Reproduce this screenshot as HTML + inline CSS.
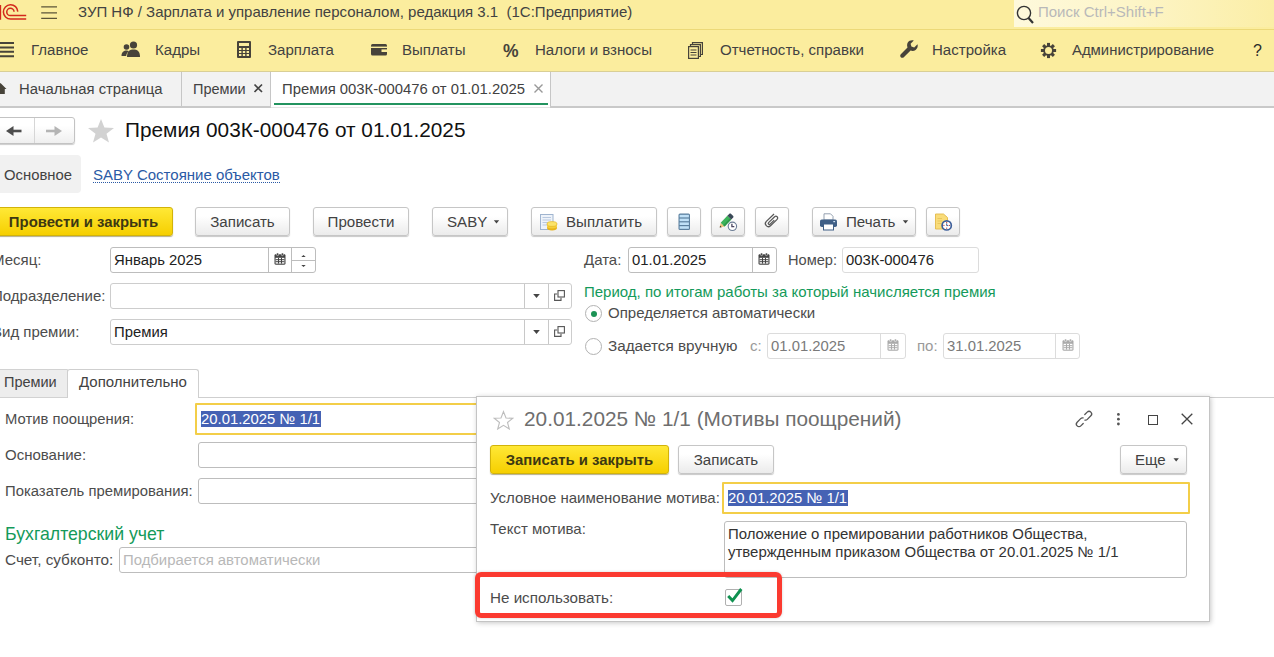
<!DOCTYPE html>
<html lang="ru">
<head>
<meta charset="utf-8">
<title>Премия 003К-000476 от 01.01.2025</title>
<style>
*{box-sizing:border-box;margin:0;padding:0}
html,body{width:1274px;height:657px;overflow:hidden;background:#fff}
body{font-family:"Liberation Sans",sans-serif;font-size:14.85px;color:#424242;position:relative}
.abs{position:absolute;white-space:nowrap}
.t{position:absolute;white-space:nowrap;line-height:18px;height:18px}
#titlebar{left:0;top:0;width:1274px;height:29px;background:#fbed9e}
#sep1{left:0;top:29px;width:1274px;height:1px;background:#ecd978}
#menubar{left:0;top:30px;width:1274px;height:41px;background:#fbed9e}
#sep2{left:0;top:71px;width:1274px;height:1px;background:#d9cf96}
#tabbar{left:0;top:72px;width:1274px;height:34px;background:#f2f2f2}
#sep3{left:0;top:106px;width:1274px;height:2px;background:#c9c9c9}
#search{left:1014px;top:0;width:260px;height:27px;background:linear-gradient(90deg,#fef9dc,#fdf5c8 45%,#fbeea6)}
.btn{position:absolute;height:29px;border:1px solid #c6c6c6;border-radius:3px;background:linear-gradient(#ffffff 30%,#ebebeb);box-shadow:0 1px 1px rgba(0,0,0,.22);text-align:center;line-height:28px;font-size:15.1px;color:#424242;white-space:nowrap}
.btn.y{background:linear-gradient(#ffe836,#f6cf00);border-color:#d2b30a;font-weight:bold;color:#3d3812;font-size:14.9px;box-shadow:0 1px 1px rgba(90,75,0,.45)}
.inp{position:absolute;height:26px;border:1px solid #bdbdbd;border-radius:3px;background:#fff;line-height:24px;font-size:14.85px;color:#222;padding-left:3px;white-space:nowrap;overflow:hidden}
.inp.dis{color:#7a7a7a;border-color:#dcdcdc}
.lbl{position:absolute;white-space:nowrap;font-size:15px;color:#4c4c4c;line-height:18px}
.sel{background:#4562b4;color:#fff}
.vsep{position:absolute;width:1px;background:#c6c6c6}
</style>
</head>
<body>
<!-- title bar -->
<div class="abs" id="titlebar"></div>
<div class="abs" id="sep1"></div>
<div class="abs" id="menubar"></div>
<div class="abs" id="sep2"></div>
<div class="abs" id="tabbar"></div>
<div class="abs" id="sep3"></div>
<div class="abs" id="search"></div>

<!-- logo -->
<svg class="abs" style="left:0;top:0" width="30" height="26" viewBox="0 0 30 26">
 <g fill="none" stroke="#d3291c" stroke-width="1.5">
  <path d="M0.4 5 V19.8"/>
  <path d="M17.8 11.6 A7.2 7.2 0 1 0 10.6 19.1 H26.2"/>
  <path d="M14.05 11.8 A3.65 3.65 0 1 0 10.4 15.6 H26.2"/>
 </g>
</svg>
<!-- hamburger -->
<svg class="abs" style="left:40px;top:0px" width="20" height="24" viewBox="0 0 20 24"><g stroke="#5c5538" stroke-width="1.35"><path d="M1.2 6.900H17M1.200 12.900H17M1.200 18.400H17"/></g></svg>
<div class="t" style="left:78px;top:3px;font-size:15px;color:#424242">ЗУП НФ / Зарплата и управление персоналом, редакция 3.1&nbsp; (1С:Предприятие)</div>
<svg class="abs" style="left:1015px;top:3px" width="20" height="22" viewBox="0 0 20 22"><circle cx="9" cy="10" r="6.6" fill="none" stroke="#333" stroke-width="1.4"/><path d="M13.5 15 L18 20" stroke="#333" stroke-width="2.2"/></svg>
<div class="t" style="left:1038px;top:3px;font-size:15px;color:#b9b9b9">Поиск Ctrl+Shift+F</div>

<!-- section menu -->
<svg class="abs" style="left:0;top:41px" width="15" height="17" viewBox="0 0 15 17"><g stroke="#47433a" stroke-width="2"><path d="M0 2H14M0 6.4H14M0 10.8H14M0 15.2H14"/></g></svg>
<div class="t" style="left:31px;top:40.5px;font-size:15.05px">Главное</div>
<svg class="abs" style="left:121px;top:40px" width="20" height="18" viewBox="0 0 20 18"><g fill="#47433a"><circle cx="12.5" cy="5" r="3.6"/><path d="M6 17 C6 11 9 9.5 12.5 9.5 S19 11 19 17Z"/><circle cx="5.5" cy="7" r="2.8"/><path d="M0.5 16 C0.5 12 3 10.5 5.5 10.5 C6.5 10.5 7.4 10.8 8 11.2 C6 12.5 5.4 14 5.2 16Z"/></g></svg>
<div class="t" style="left:155px;top:40.5px;font-size:15.05px">Кадры</div>
<svg class="abs" style="left:237px;top:41px" width="14" height="17" viewBox="0 0 14 17"><rect x="0" y="0" width="14" height="17" rx="1" fill="#47433a"/><rect x="2" y="2" width="10" height="3" fill="#fbed9e"/><g fill="#fbed9e"><rect x="2" y="7" width="2.4" height="2"/><rect x="5.8" y="7" width="2.4" height="2"/><rect x="9.6" y="7" width="2.4" height="2"/><rect x="2" y="10" width="2.4" height="2"/><rect x="5.8" y="10" width="2.4" height="2"/><rect x="9.6" y="10" width="2.4" height="2"/><rect x="2" y="13" width="2.4" height="2"/><rect x="5.8" y="13" width="2.4" height="2"/><rect x="9.6" y="13" width="2.4" height="2"/></g></svg>
<div class="t" style="left:268px;top:40.5px;font-size:15.05px">Зарплата</div>
<svg class="abs" style="left:370.700px;top:44px" width="17" height="12" viewBox="0 0 17 12"><rect x="0" y="0" width="16" height="11.500" rx="1.500" fill="#47433a"/><rect x="0" y="2.600" width="16" height="1.400" fill="#fbed9e"/><rect x="10.500" y="5.400" width="5.500" height="2.600" fill="#fbed9e"/></svg>
<div class="t" style="left:402px;top:40.5px;font-size:15.05px">Выплаты</div>
<div class="t" style="left:503px;top:42px;font-weight:bold;font-size:17.500px;color:#47433a">%</div>
<div class="t" style="left:535px;top:40.5px;font-size:15.05px">Налоги и взносы</div>
<svg class="abs" style="left:688px;top:41.600px" width="15" height="17" viewBox="0 0 15 17"><g fill="none" stroke="#47433a" stroke-width="1.2"><path d="M4.5 2.5V0.6H14.4V12.5H12.5"/><path d="M2.5 4.5V2.6H12.4V14.5H10.5"/><rect x="0.6" y="4.6" width="9.8" height="11.8" fill="#fbed9e"/><path d="M2.5 8H8.5M2.5 10.5H8.5M2.5 13H8.5"/></g></svg>
<div class="t" style="left:720px;top:40.5px;font-size:15.05px">Отчетность, справки</div>
<svg class="abs" style="left:900px;top:40px" width="18" height="18" viewBox="0 0 18 18"><path d="M17.5 4.2 L14.2 7.4 L11.4 6.6 L10.6 3.8 L13.8 0.5 C11.5 -0.2 9 0.6 7.8 2.6 C6.9 4.2 6.9 6 7.5 7.4 L0.8 14.2 C0 15 0 16.4 0.8 17.2 C1.6 18 3 18 3.8 17.2 L10.6 10.5 C12.2 11.2 14.2 11 15.6 9.9 C17.4 8.6 18.1 6.3 17.5 4.2Z" fill="#47433a"/></svg>
<div class="t" style="left:932px;top:40.5px;font-size:15.05px">Настройка</div>
<svg class="abs" style="left:1040px;top:41.500px" width="17" height="17" viewBox="-8.500 -8.500 17 17"><g fill="#47433a"><circle r="5.300"/><rect x="-1.500" y="-7.600" width="3" height="15.200"/><rect x="-1.500" y="-7.600" width="3" height="15.200" transform="rotate(45)"/><rect x="-1.500" y="-7.600" width="3" height="15.200" transform="rotate(90)"/><rect x="-1.500" y="-7.600" width="3" height="15.200" transform="rotate(135)"/></g><circle r="3.500" fill="#fbed9e"/></svg>
<div class="t" style="left:1072px;top:40.5px;font-size:14.9px">Администрирование</div>
<div class="t" style="left:1253px;top:42px;font-size:16px;color:#2a2a2a">?</div>

<!-- open windows tabs -->
<svg class="abs" style="left:0;top:83px" width="9" height="12" viewBox="0 0 9 12"><path d="M-5.500 6 L0.500 0 L6.500 6 H4.800 V11 H-3 V6Z" fill="#47433a"/></svg>
<div class="t" style="left:19px;top:80px">Начальная страница</div>
<div class="vsep" style="left:181px;top:72px;height:34px"></div>
<div class="t" style="left:193px;top:80px;font-size:14.500px">Премии</div>
<svg class="abs" style="left:253px;top:83px" width="11" height="11" viewBox="0 0 11 11"><path d="M1.500 1.500L9 9M9 1.500L1.500 9" stroke="#444" stroke-width="1.700"/></svg>
<div class="vsep" style="left:270px;top:72px;height:34px"></div>
<div class="abs" style="left:271px;top:72px;width:279px;height:35px;background:#fff"></div><div class="abs" style="left:271px;top:107px;width:279px;height:1px;background:#e4e4e4"></div>
<div class="vsep" style="left:550px;top:72px;height:34px"></div>
<div class="t" style="left:282px;top:80px">Премия 003К-000476 от 01.01.2025</div>
<svg class="abs" style="left:532.5px;top:83px" width="11" height="11" viewBox="0 0 11 11"><path d="M1.5 1.5L9.5 9.5M9.5 1.5L1.5 9.5" stroke="#999" stroke-width="1.4"/></svg>
<div class="abs" style="left:274px;top:103px;width:274px;height:2px;background:#23935f"></div>

<!-- form header -->
<div class="abs" style="left:-4px;top:117px;width:79px;height:27px;border:1px solid #c3c3c3;border-radius:3px;background:linear-gradient(#fff 30%,#efefef);box-shadow:0 1px 1px rgba(0,0,0,.2)"></div>
<div class="vsep" style="left:34px;top:118px;height:25px;background:#d6d6d6"></div>
<svg class="abs" style="left:5px;top:124px" width="18" height="14" viewBox="0 0 18 14"><path d="M16.5 7H4" fill="none" stroke="#4d4d4d" stroke-width="2.6"/><path d="M1 7 L8.5 2 V12Z" fill="#4d4d4d"/></svg>
<svg class="abs" style="left:45px;top:124px" width="18" height="14" viewBox="0 0 18 14"><path d="M1 7H13" fill="none" stroke="#b4b4b4" stroke-width="2.6"/><path d="M17 7 L9.5 2 V12Z" fill="#b4b4b4"/></svg>
<svg class="abs" style="left:87px;top:118px" width="28" height="26" viewBox="0 0 28 26"><path d="M14 1 L17.4 9.6 L27 10 L19.5 15.8 L22 24.5 L14 19.5 L6 24.5 L8.5 15.8 L1 10 L10.6 9.6Z" fill="#d2d2d2"/></svg>
<div class="t" style="left:125px;top:118px;font-size:20.8px;line-height:24px;height:24px;color:#111">Премия 003К-000476 от 01.01.2025</div>

<div class="abs" style="left:-4px;top:155px;width:85px;height:38px;background:#f1f1f1;border-radius:4px"></div>
<div class="t" style="left:4px;top:166px;color:#424242">Основное</div>
<div class="t" style="left:93px;top:166px;font-size:15px;color:#2a5aa5;border-bottom:1px dotted #2a5aa5;height:17px;line-height:17px">SABY Состояние объектов</div>

<!-- command bar -->
<div class="btn y" style="left:-8px;top:207px;width:181px;padding-left:2px">Провести и закрыть</div>
<div class="btn" style="left:195px;top:207px;width:95px">Записать</div>
<div class="btn" style="left:313px;top:207px;width:96px">Провести</div>
<div class="btn" style="left:432px;top:207px;width:76px;text-align:left;padding-left:14px">SABY</div>
<svg class="abs" style="left:493px;top:220px" width="7" height="4" viewBox="0 0 7 4"><path d="M0.8 0.3H6.2L3.5 3.5Z" fill="#444"/></svg>
<div class="btn" style="left:531px;top:207px;width:126px;text-align:left;padding-left:34px">Выплатить</div>
<!-- doc + coins icon -->
<svg class="abs" style="left:539px;top:213px" width="20" height="19" viewBox="0 0 20 19">
 <rect x="1.5" y="1.5" width="12.5" height="15" fill="#eef3fa" stroke="#9fb4cf" stroke-width="1"/>
 <path d="M3.5 4.5H12M3.5 7H12M3.5 9.500H9M3.5 12H8" stroke="#b9c9e0" stroke-width="1"/>
 <ellipse cx="13" cy="15" rx="5" ry="2.4" fill="#e8b41a"/>
 <ellipse cx="13" cy="13" rx="5" ry="2.4" fill="#f5cf3a"/>
 <ellipse cx="13" cy="11" rx="5" ry="2.4" fill="#fbe36a" stroke="#e2ae18" stroke-width=".6"/>
</svg>
<div class="btn" style="left:667px;top:207px;width:34px"></div>
<svg class="abs" style="left:678px;top:213px" width="13" height="18" viewBox="0 0 13 18">
 <rect x="0.5" y="0.5" width="11.5" height="16.5" rx="1.5" fill="#5b7f9e"/>
 <rect x="1.6" y="1.8" width="9.3" height="2.6" fill="#bfe0f7"/><rect x="1.6" y="5.6" width="9.3" height="2.6" fill="#bfe0f7"/><rect x="1.6" y="9.400" width="9.3" height="2.6" fill="#bfe0f7"/><rect x="1.6" y="13.2" width="9.3" height="2.600" fill="#bfe0f7"/>
</svg>
<div class="btn" style="left:711px;top:207px;width:34px"></div>
<svg class="abs" style="left:711px;top:207px" width="34" height="29" viewBox="711 207 34 29">
 <g transform="translate(719.7 227.6) rotate(-46)">
  <path d="M0 0 L4.200 -2.700 V2.700Z" fill="#f0c27a"/>
  <path d="M0 0 L1.700 -1.100 V1.100Z" fill="#3a3a3a"/>
  <rect x="4.200" y="-2.700" width="9.600" height="5.400" fill="#3db35a"/>
  <rect x="4.200" y="0.900" width="9.600" height="1.800" fill="#2f9a4b"/>
  <path d="M13.800 -2.700 H16.400 C17.300 -2.700 17.800 -2.200 17.800 -1.300 V1.300 C17.800 2.200 17.300 2.700 16.400 2.700 H13.800Z" fill="#3b4a58"/>
 </g>
 <circle cx="732.400" cy="226.300" r="4.200" fill="#fff" stroke="#6c7d95" stroke-width="1.100"/>
 <path d="M731.900 223.800 V226.700 H734.300" fill="none" stroke="#4a4560" stroke-width="1.300"/>
</svg>
<div class="btn" style="left:755px;top:207px;width:34px"></div>
<svg class="abs" style="left:755px;top:207px" width="34" height="29" viewBox="755 207 34 29"><path transform="translate(771.3 220.8) rotate(-44)" d="M6.700 -3 L-4 -3 A3 3 0 0 0 -4 3 L5.200 3 A1.800 1.800 0 0 0 5.200 -0.600 L-3.200 -0.600 A1.070 1.070 0 0 0 -3.200 1.550 L2.600 1.550" fill="none" stroke="#585858" stroke-width="1.250"/></svg>
<div class="btn" style="left:812px;top:207px;width:104px;text-align:left;padding-left:33px">Печать</div>
<svg class="abs" style="left:902px;top:220px" width="7" height="4" viewBox="0 0 7 4"><path d="M0.8 0.3H6.2L3.5 3.5Z" fill="#444"/></svg>
<svg class="abs" style="left:819px;top:213px" width="19" height="18" viewBox="0 0 19 18">
 <path d="M5 0.800H11.500L14 3.300V7H5Z" fill="#fff" stroke="#8a97a8" stroke-width=".9"/>
 <rect x="1" y="6.500" width="17" height="7.500" rx="1.800" fill="#3f5f86"/>
 <rect x="4.500" y="11" width="10" height="6" fill="#fff" stroke="#3f5f86" stroke-width="1"/>
 <rect x="14.300" y="8" width="1.800" height="1.200" fill="#cfe0f2"/>
</svg>
<div class="btn" style="left:926px;top:207px;width:34px"></div>
<svg class="abs" style="left:934px;top:213px" width="20" height="19" viewBox="0 0 20 19">
 <path d="M1.500 1H9.500L13.500 4.500V16H1.500Z" fill="#f9dc7a" stroke="#e2b94a" stroke-width=".9"/>
 <path d="M3.500 5.500H8M3.500 8H8M3.500 10.500H7" stroke="#e9c75c" stroke-width="1"/>
 <circle cx="12.700" cy="12.400" r="4.600" fill="#fff" stroke="#3d5f9a" stroke-width="1.700"/>
 <path d="M12.700 9V10.200M16.100 12.400H14.900M12.700 15.800V14.600M9.300 12.400H10.500" stroke="#d23a2a" stroke-width="1"/>
 <path d="M12.700 10.400V12.600H14.300" fill="none" stroke="#3d5f9a" stroke-width="1"/>
</svg>

<!-- fields left -->
<div class="lbl" style="left:-8px;top:251px">Месяц:</div>
<div class="inp" style="left:110px;top:247px;width:206px">Январь 2025</div>
<div class="vsep" style="left:268px;top:248px;height:24px;background:#bdbdbd"></div>
<div class="vsep" style="left:291px;top:248px;height:24px;background:#bdbdbd"></div>
<div class="abs" style="left:292px;top:260px;width:23px;height:1px;background:#bdbdbd"></div>
<svg class="abs" style="left:300px;top:254px" width="7" height="14" viewBox="0 0 7 14"><path d="M1.300 3L3.500 0.900L5.700 3Z M1.300 11L3.500 13.100L5.700 11Z" fill="#444"/></svg>
<svg class="abs cal" style="left:274px;top:253px" width="12" height="12" viewBox="0 0 12 12"><path d="M0.500 2.500C0.500 1.700 1 1.200 1.800 1.200H10.200C11 1.200 11.500 1.700 11.500 2.500V10.500C11.500 11.200 11 11.700 10.200 11.700H1.800C1 11.700 .5 11.200 .5 10.500Z" fill="#444"/><rect x="1.600" y="4.800" width="8.800" height="5.800" fill="#fff"/><path d="M1.600 6.700H10.400M1.600 8.700H10.400M4.500 4.800V10.600M7.500 4.800V10.600" stroke="#444" stroke-width="1"/><rect x="2.600" y="0" width="2" height="2.600" rx=".8" fill="#444" stroke="#fff" stroke-width=".5"/><rect x="7.400" y="0" width="2" height="2.600" rx=".8" fill="#444" stroke="#fff" stroke-width=".5"/></svg>

<div class="lbl" style="left:-8px;top:287px">Подразделение:</div>
<div class="inp" style="left:110px;top:283px;width:462px;border-color:#cdcdcd"></div>
<div class="vsep" style="left:524px;top:284px;height:24px;background:#c8c8c8"></div>
<div class="vsep" style="left:548px;top:284px;height:24px;background:#c8c8c8"></div>
<svg class="abs" style="left:533px;top:294px" width="7" height="4" viewBox="0 0 7 4"><path d="M0.200 0H6.800L3.500 3.900Z" fill="#444"/></svg>
<svg class="abs" style="left:554px;top:290px" width="11" height="11" viewBox="0 0 11 11"><rect x="4" y="0.600" width="6.400" height="6.400" fill="none" stroke="#555" stroke-width="1.100"/><path d="M3.200 4H0.600V10.400H7V7.800" fill="none" stroke="#555" stroke-width="1.100"/></svg>
<div class="lbl" style="left:-8px;top:323px">Вид премии:</div>
<div class="inp" style="left:110px;top:319px;width:462px;border-color:#cdcdcd">Премия</div>
<div class="vsep" style="left:524px;top:320px;height:24px;background:#c8c8c8"></div>
<div class="vsep" style="left:548px;top:320px;height:24px;background:#c8c8c8"></div>
<svg class="abs" style="left:533px;top:330px" width="7" height="4" viewBox="0 0 7 4"><path d="M0.200 0H6.800L3.500 3.900Z" fill="#444"/></svg>
<svg class="abs" style="left:554px;top:326px" width="11" height="11" viewBox="0 0 11 11"><rect x="4" y="0.600" width="6.400" height="6.400" fill="none" stroke="#555" stroke-width="1.100"/><path d="M3.200 4H0.600V10.400H7V7.800" fill="none" stroke="#555" stroke-width="1.100"/></svg>

<!-- fields right -->
<div class="lbl" style="left:584px;top:251px">Дата:</div>
<div class="inp" style="left:628px;top:247px;width:149px">01.01.2025</div>
<div class="vsep" style="left:752px;top:248px;height:24px;background:#bdbdbd"></div>
<svg class="abs cal" style="left:758px;top:253px" width="12" height="12" viewBox="0 0 12 12"><path d="M0.500 2.500C0.500 1.700 1 1.200 1.800 1.200H10.200C11 1.200 11.500 1.700 11.500 2.500V10.500C11.500 11.200 11 11.700 10.200 11.700H1.800C1 11.700 .5 11.200 .5 10.500Z" fill="#444"/><rect x="1.600" y="4.800" width="8.800" height="5.800" fill="#fff"/><path d="M1.600 6.700H10.400M1.600 8.700H10.400M4.500 4.800V10.600M7.500 4.800V10.600" stroke="#444" stroke-width="1"/><rect x="2.600" y="0" width="2" height="2.600" rx=".8" fill="#444" stroke="#fff" stroke-width=".5"/><rect x="7.400" y="0" width="2" height="2.600" rx=".8" fill="#444" stroke="#fff" stroke-width=".5"/></svg>
<div class="lbl" style="left:788px;top:251px;font-size:14.6px">Номер:</div>
<div class="inp" style="left:842px;top:247px;width:137px;border-color:#dcdcdc">003К-000476</div>
<div class="lbl" style="left:584px;top:283px;color:#149a5a">Период, по итогам работы за который начисляется премия</div>
<div class="abs" style="left:585px;top:305px;width:17px;height:17px;border:1px solid #b2b2b2;border-radius:50%;background:#fff"></div>
<div class="abs" style="left:590.5px;top:310.5px;width:6px;height:6px;border-radius:50%;background:#1b9355"></div>
<div class="lbl" style="left:608px;top:304px">Определяется автоматически</div>
<div class="abs" style="left:585px;top:338px;width:17px;height:17px;border:1px solid #b2b2b2;border-radius:50%;background:#fff"></div>
<div class="lbl" style="left:608px;top:337px;font-size:15.25px">Задается вручную</div>
<div class="lbl" style="left:750px;top:337px;color:#9a9a9a">с:</div>
<div class="inp dis" style="left:767px;top:333px;width:139px">01.01.2025</div>
<div class="vsep" style="left:880px;top:334px;height:24px;background:#dcdcdc"></div>
<svg class="abs cal" style="left:887px;top:339px;opacity:.45" width="12" height="12" viewBox="0 0 12 12"><path d="M0.500 2.500C0.500 1.700 1 1.200 1.800 1.200H10.200C11 1.200 11.500 1.700 11.500 2.500V10.500C11.500 11.200 11 11.700 10.200 11.700H1.800C1 11.700 .5 11.200 .5 10.500Z" fill="#444"/><rect x="1.600" y="4.800" width="8.800" height="5.800" fill="#fff"/><path d="M1.600 6.700H10.400M1.600 8.700H10.400M4.500 4.800V10.600M7.500 4.800V10.600" stroke="#444" stroke-width="1"/><rect x="2.600" y="0" width="2" height="2.600" rx=".8" fill="#444" stroke="#fff" stroke-width=".5"/><rect x="7.400" y="0" width="2" height="2.600" rx=".8" fill="#444" stroke="#fff" stroke-width=".5"/></svg>
<div class="lbl" style="left:917px;top:337px;color:#9a9a9a">по:</div>
<div class="inp dis" style="left:943px;top:333px;width:137px">31.01.2025</div>
<div class="vsep" style="left:1055px;top:334px;height:24px;background:#dcdcdc"></div>
<svg class="abs cal" style="left:1062px;top:339px;opacity:.45" width="12" height="12" viewBox="0 0 12 12"><path d="M0.500 2.500C0.500 1.700 1 1.200 1.800 1.200H10.200C11 1.200 11.500 1.700 11.500 2.500V10.500C11.500 11.200 11 11.700 10.200 11.700H1.800C1 11.700 .5 11.200 .5 10.500Z" fill="#444"/><rect x="1.600" y="4.800" width="8.800" height="5.800" fill="#fff"/><path d="M1.600 6.700H10.400M1.600 8.700H10.400M4.500 4.800V10.600M7.500 4.800V10.600" stroke="#444" stroke-width="1"/><rect x="2.600" y="0" width="2" height="2.600" rx=".8" fill="#444" stroke="#fff" stroke-width=".5"/><rect x="7.400" y="0" width="2" height="2.600" rx=".8" fill="#444" stroke="#fff" stroke-width=".5"/></svg>

<!-- pages -->
<div class="abs" style="left:198px;top:397px;width:1076px;height:1px;background:#cfcfcf"></div>
<div class="abs" style="left:-4px;top:369px;width:72px;height:29px;background:#ededed;border:1px solid #d2d2d2;border-radius:2px 0 0 0"></div>
<div class="t" style="left:4px;top:373px;font-size:14.5px">Премии</div>
<div class="abs" style="left:67px;top:368.500px;width:132px;height:29.500px;background:#fff;border:1px solid #cfcfcf;border-bottom:none;border-radius:3px 3px 0 0"></div>
<div class="t" style="left:79px;top:373px;font-size:15px">Дополнительно</div>

<div class="lbl" style="left:5px;top:410px;font-size:14.8px">Мотив поощрения:</div>
<div class="inp" style="left:195px;top:403px;width:291px;height:32px;border:2px solid #f3ce48;border-radius:1px;padding-left:4px;line-height:29px"><span class="sel" style="display:inline-block;line-height:16px;padding:0 1px 0 0;vertical-align:0">20.01.2025 № 1/1</span></div>
<div class="lbl" style="left:5px;top:446px">Основание:</div>
<div class="inp" style="left:198px;top:442px;width:290px"></div>
<div class="lbl" style="left:5px;top:482px;font-size:14.85px">Показатель премирования:</div>
<div class="inp" style="left:198px;top:478px;width:290px"></div>
<div class="lbl" style="left:5px;top:524px;font-size:17.7px;line-height:20px;color:#149a5a">Бухгалтерский учет</div>
<div class="lbl" style="left:5px;top:551px;font-size:15.3px">Счет, субконто:</div>
<div class="inp" style="left:119px;top:547px;width:370px;color:#b8b8b8;padding-left:3px;font-size:14.9px">Подбирается автоматически</div>

<!-- dialog -->
<div class="abs" id="dlg" style="left:476px;top:396px;width:734px;height:226px;background:#fff;border:1px solid #c4c4c4;box-shadow:1px 1px 5px rgba(0,0,0,.22)"></div>
<svg class="abs" style="left:493px;top:410px" width="21" height="20" viewBox="0 0 21 20"><path d="M10.500 1.600 L13 8 L19.800 8.300 L14.500 12.500 L16.300 19 L10.500 15.300 L4.700 19 L6.500 12.500 L1.200 8.300 L8 8Z" fill="none" stroke="#bdbdbd" stroke-width="1.100"/></svg>
<div class="t" style="left:524px;top:407px;font-size:20.8px;line-height:24px;height:24px;color:#6e6e6e">20.01.2025 № 1/1 (Мотивы поощрений)</div>
<svg class="abs" style="left:1074px;top:409px" width="20" height="20" viewBox="0 0 20 20"><g fill="none" stroke="#555" stroke-width="1.300" stroke-linecap="round" transform="rotate(-45 10 10)"><path d="M8.600 12.600 H5.200 A2.600 2.600 0 0 1 5.200 7.400 H10.200 A2.600 2.600 0 0 1 12.400 8.600" transform="translate(-2.300 0)"/><path d="M11.400 7.400 H14.800 A2.600 2.600 0 0 1 14.800 12.600 H9.800 A2.600 2.600 0 0 1 7.600 11.400" transform="translate(2.300 0)"/></g></svg>
<svg class="abs" style="left:1116px;top:412px" width="5" height="14" viewBox="0 0 5 14"><g fill="#555"><circle cx="2.400" cy="2.400" r="1.400"/><circle cx="2.400" cy="7.200" r="1.400"/><circle cx="2.400" cy="12" r="1.400"/></g></svg>
<div class="abs" style="left:1148px;top:415px;width:10px;height:10px;border:1.300px solid #444"></div>
<svg class="abs" style="left:1181px;top:413px" width="12" height="12" viewBox="0 0 12 12"><path d="M0.700 0.700L11.300 11.300M11.300 0.700L0.700 11.300" stroke="#444" stroke-width="1.300"/></svg>

<div class="btn y" style="left:490px;top:444.500px;width:179px">Записать и закрыть</div>
<div class="btn" style="left:678px;top:444.500px;width:96px">Записать</div>
<div class="btn" style="left:1120px;top:444.500px;width:67px;text-align:left;padding-left:14px">Еще</div>
<svg class="abs" style="left:1173px;top:458px" width="7" height="4" viewBox="0 0 7 4"><path d="M0.500 0.200H5.900L3.200 3.500Z" fill="#444"/></svg>
<div class="lbl" style="left:490px;top:489px">Условное наименование мотива:</div>
<div class="inp" style="left:722px;top:482px;width:468px;height:32px;border:2px solid #f3ce48;border-radius:1px;padding-left:4px;line-height:29px"><span class="sel" style="display:inline-block;line-height:16px;padding:0 1px 0 0">20.01.2025 № 1/1</span></div>
<div class="lbl" style="left:490px;top:520px">Текст мотива:</div>
<div class="inp" style="left:724px;top:521px;width:463px;height:57px;line-height:18px;padding-top:3px;white-space:normal;color:#333;font-size:14.95px">Положение о премировании работников Общества, утвержденным приказом Общества от 20.01.2025 № 1/1</div>
<div class="lbl" style="left:490px;top:589px;font-size:15.2px">Не использовать:</div>
<div class="abs" style="left:725px;top:589px;width:17px;height:17px;border:1px solid #b0b0b0;border-radius:2px;background:#fff"></div>
<svg class="abs" style="left:724px;top:586px" width="20" height="20" viewBox="724 586 20 20"><path d="M728.200 596 L732.500 600.600 L741.300 589" fill="none" stroke="#0f9150" stroke-width="2.900"/></svg>
<div class="abs" style="left:475px;top:572px;width:307px;height:46px;border:5px solid #fb3a30;border-radius:6px;box-shadow:0 0 3px rgba(0,0,0,.18)"></div>
</body>
</html>
